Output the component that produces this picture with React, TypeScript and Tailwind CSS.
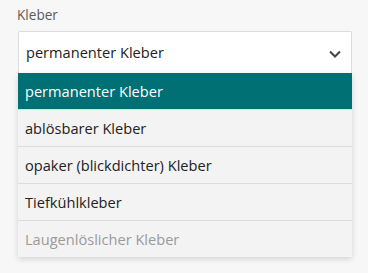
import React from 'react';

const options = [
  'permanenter Kleber',
  'ablösbarer Kleber',
  'opaker (blickdichter) Kleber',
  'Tiefkühlkleber',
  'Laugenlöslicher Kleber',
];

export default function App() {
  const selected = 0;
  return (
    <div
      className="w-[368px] h-[273px] bg-[#f7f7f7] pl-[18px] pr-4 pt-[5px]"
      style={{ fontFamily: '"Open Sans", "Noto Sans", sans-serif' }}
    >
      <label className="block text-[13.6px] leading-[20px] text-[#5a5a5a] -ml-px">Kleber</label>
      <div className="mt-[6px] w-[334px]">
        {/* Select field */}
        <div className="h-[42px] bg-white border border-[#dcdcdc] border-b-0 rounded-t-[2px] flex items-center justify-between pl-[7px] pr-[10px]">
          <span className="text-[14.6px] text-[#222] pt-px">{options[selected]}</span>
          <svg width="12" height="8" viewBox="0 0 12 8" className="text-[#444] mt-[2px]">
            <path d="M1 1.5 L6 6.5 L11 1.5" fill="none" stroke="currentColor" strokeWidth="2" />
          </svg>
        </div>

        {/* Options list */}
        <ul className="bg-[#f3f3f3] shadow-[0_2px_6px_rgba(0,0,0,0.15)]">
          {options.map((opt, i) => (
            <li
              key={opt}
              className={
                i === selected
                  ? 'h-[36px] flex items-center pl-[7px] pt-[2px] text-[14.6px] bg-[#007074] text-white'
                  : i === options.length - 1
                  ? 'h-[37px] flex items-center pl-[7px] pt-[2px] text-[14.6px] border-t border-[#dcdcdc] text-[#9a9a9a]'
                  : 'h-[37px] flex items-center pl-[7px] pt-[2px] text-[14.6px] border-t border-[#dcdcdc] text-[#222]'
              }
            >
              {opt}
            </li>
          ))}
        </ul>
      </div>
    </div>
  );
}
